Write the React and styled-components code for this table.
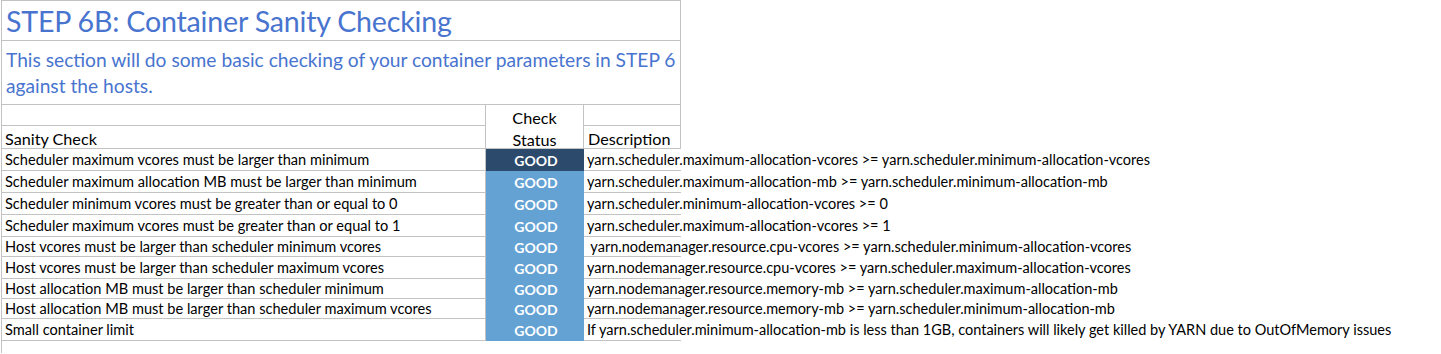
import React from "react";
import styled, { createGlobalStyle } from "styled-components";

const GRID = "#c3c3c3";
const TITLE_BLUE = "#4874cf";

const Global = createGlobalStyle`
  html, body { margin: 0; padding: 0; background: #fff; }
  body { font-family: Lato, "Liberation Sans", sans-serif; color: #000; }
`;

const Page = styled.div`
  padding-left: 1px;
  min-height: 354px;
  box-sizing: border-box;
`;

const Sheet = styled.div`
  display: grid;
  grid-template-columns: 484px 98px 97px;
  grid-template-rows: 40px 64px 21px 23px 22px 22px 22px 22px 20px 22px 20px 20px 22px;
  width: 680px;
  box-sizing: border-box;
  border-top: 1px solid ${GRID};
  border-left: 1px solid ${GRID};
  min-height: 353px;
  align-content: start;
`;

const Cell = styled.div`
  box-sizing: border-box;
  border-bottom: 1px solid ${GRID};
  border-right: 1px solid ${GRID};
  display: flex;
  align-items: ${(p) => p.$align || "center"};
  min-width: 0;
`;

const TitleCell = styled(Cell)`
  grid-column: 1 / span 3;
  color: ${TITLE_BLUE};
  font-size: 28.6px;
  padding: 0 0 0 4px;
  letter-spacing: -0.2px;
  white-space: nowrap;
`;

const SubtitleCell = styled(Cell)`
  grid-column: 1 / span 3;
  color: ${TITLE_BLUE};
  font-size: 19.2px;
  line-height: 26px;
  padding: 0 0 0 4px;
`;

const HeaderCell = styled(Cell)`
  font-size: 16.2px;
  line-height: 18px;
  padding: 0 0 0 ${(p) => p.$pad || 3}px;
  grid-row: ${(p) => p.$row || "auto"};
`;

const StatusHeader = styled(Cell)`
  grid-row: 3 / span 2;
  font-size: 16.2px;
  flex-direction: column;
  justify-content: flex-end;
  align-items: center;
  text-align: center;
`;

const HeaderLine = styled.span`
  display: block;
  line-height: ${(p) => p.$h}px;
`;

const CheckCell = styled(Cell)`
  font-size: 14.6px;
  padding-left: 3px;
  white-space: nowrap;
`;

const StatusCell = styled.div`
  box-sizing: border-box;
  background: ${(p) => (p.$dark ? "#2c4a6b" : "#64a2d4")};
  color: #fff;
  font-weight: 700;
  font-size: 14px;
  display: flex;
  align-items: center;
  justify-content: center;
  padding-left: 2px;
`;

const DescCell = styled.div`
  box-sizing: border-box;
  border-bottom: 1px solid ${GRID};
  font-size: 14.5px;
  padding-left: 3px;
  white-space: pre;
  display: flex;
  align-items: center;
  overflow: visible;
  min-width: 0;
`;

const rows = [
  ["Scheduler maximum vcores must be larger than minimum", "yarn.scheduler.maximum-allocation-vcores >= yarn.scheduler.minimum-allocation-vcores"],
  ["Scheduler maximum allocation MB must be larger than minimum", "yarn.scheduler.maximum-allocation-mb >= yarn.scheduler.minimum-allocation-mb"],
  ["Scheduler minimum vcores must be greater than or equal to 0", "yarn.scheduler.minimum-allocation-vcores >= 0"],
  ["Scheduler maximum vcores must be greater than or equal to 1", "yarn.scheduler.maximum-allocation-vcores >= 1"],
  ["Host vcores must be larger than scheduler minimum vcores", " yarn.nodemanager.resource.cpu-vcores >= yarn.scheduler.minimum-allocation-vcores"],
  ["Host vcores must be larger than scheduler maximum vcores", "yarn.nodemanager.resource.cpu-vcores >= yarn.scheduler.maximum-allocation-vcores"],
  ["Host allocation MB must be larger than scheduler minimum", "yarn.nodemanager.resource.memory-mb >= yarn.scheduler.maximum-allocation-mb"],
  ["Host allocation MB must be larger than scheduler maximum vcores", "yarn.nodemanager.resource.memory-mb >= yarn.scheduler.minimum-allocation-mb"],
  ["Small container limit", "If yarn.scheduler.minimum-allocation-mb is less than 1GB, containers will likely get killed by YARN due to OutOfMemory issues"],
];

export default function App() {
  return (
    <Page>
      <Global />
      <Sheet>
        <TitleCell>STEP 6B: Container Sanity Checking</TitleCell>
        <SubtitleCell>
          This section will do some basic checking of your container parameters in STEP 6 against the hosts.
        </SubtitleCell>
        <HeaderCell $row={3} />
        <StatusHeader>
          <HeaderLine $h={28}>Check</HeaderLine>
          <HeaderLine $h={16}>Status</HeaderLine>
        </StatusHeader>
        <HeaderCell $row={3} />
        <HeaderCell $row={4} $align="flex-end">Sanity Check</HeaderCell>
        <HeaderCell $row={4} $align="flex-end" $pad={4}>Description</HeaderCell>
        {rows.map(([check, desc], i) => (
          <React.Fragment key={i}>
            <CheckCell>{check}</CheckCell>
            <StatusCell $dark={i === 0}>GOOD</StatusCell>
            <DescCell>{desc}</DescCell>
          </React.Fragment>
        ))}
      </Sheet>
    </Page>
  );
}
